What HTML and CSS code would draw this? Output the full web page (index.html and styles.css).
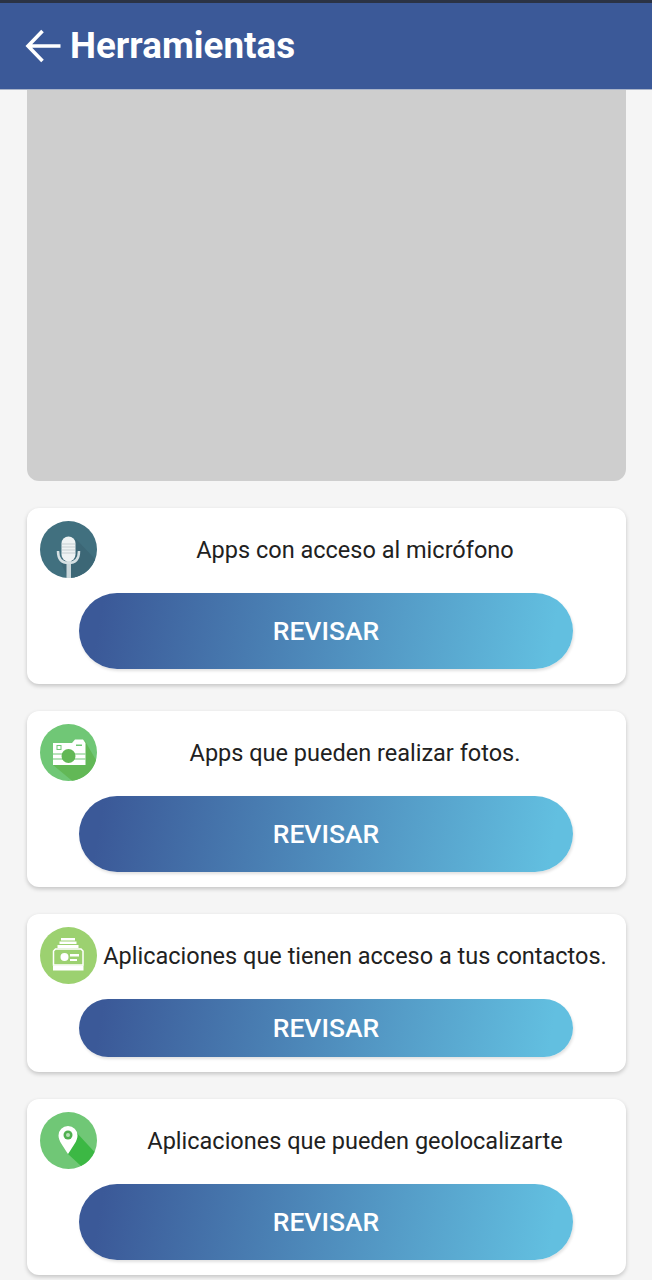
FILE: index.html
```html
<!DOCTYPE html>
<html lang="es">
<head>
    <meta charset="UTF-8">
    <meta name="viewport" content="width=device-width, initial-scale=1.0">
    <title>Herramientas</title>
    <link rel="stylesheet" href="styles.css">
</head>
<body>
    <div class="statusbar"></div>
    <header class="appbar">
        <svg class="back" viewBox="0 0 36 36" width="36" height="36">
            <path d="M35.500 18H3M17.500 3L3 18L17.500 33" fill="none" stroke="#fff" stroke-width="3.600"/>
        </svg>
        <h1>Herramientas</h1>
    </header>
    <main class="content">
        <div class="placeholder"></div>

        <section class="card">
            <div class="row">
                <svg class="icon" viewBox="0 0 57 57">
                    <circle cx="28.500" cy="28.500" r="28.500" fill="#41707f"/>
                    <path d="M36 18L55 38A28.500 28.500 0 0 1 34 56.500L28 57L20 40Z" fill="#3c6776"/>
                    <rect x="26.500" y="40" width="4.500" height="17" fill="#c9d6da"/>
                    <path d="M18 30C18 38 22 42 28.500 42S39 38 39 30" fill="none" stroke="#d5e0e3" stroke-width="2.500"/>
                    <rect x="21.500" y="15.500" width="14" height="25" rx="7" fill="#eef2f3"/>
                    <path d="M22 23H35M22 26H35M22 29H35M22 32H35" stroke="#c5ced1" stroke-width="1"/>
                </svg>
                <p>Apps con acceso al micrófono</p>
            </div>
            <button class="revisar">REVISAR</button>
        </section>

        <section class="card">
            <div class="row">
                <svg class="icon" viewBox="0 0 57 57">
                    <circle cx="28.500" cy="28.500" r="28.500" fill="#70c776"/>
                    <path d="M13 41L45 17L56 36A28.500 28.500 0 0 1 32 56.800Z" fill="#62b856"/>
                    <path d="M13 19H32L35 15.500H43L45.500 19V41H13Z" fill="#fff"/>
                    <path d="M13 30H45.500M13 35H45.500" stroke="#70c776" stroke-width="1.200"/>
                    <circle cx="28.500" cy="32" r="7" fill="#62b856"/>
                    <rect x="17" y="21.500" width="4" height="4" fill="none" stroke="#70c776" stroke-width="1"/>
                    <rect x="36" y="20.500" width="6" height="1.500" fill="#70c776"/>
                </svg>
                <p>Apps que pueden realizar fotos.</p>
            </div>
            <button class="revisar">REVISAR</button>
        </section>

        <section class="card">
            <div class="row">
                <svg class="icon" viewBox="0 0 57 57">
                    <circle cx="28.500" cy="28.500" r="28.500" fill="#9cd170"/>
                    <path d="M21 11H35V13.500H21ZM19.500 14.500H36.500V17H19.500ZM17.500 18H38.500V21H17.500Z" fill="#fff"/>
                    <path d="M15.500 22H41L43 24V38H13.500V24Z" fill="none" stroke="#fff" stroke-width="1.500"/>
                    <circle cx="24.500" cy="30" r="4" fill="#fff"/>
                    <path d="M30 27H39V29.500H30ZM30 32H37V34H30Z" fill="#fff"/>
                    <rect x="13" y="38.500" width="30.500" height="5" fill="#fff"/>
                </svg>
                <p>Aplicaciones que tienen acceso a tus contactos.</p>
            </div>
            <button class="revisar">REVISAR</button>
        </section>

        <section class="card">
            <div class="row">
                <svg class="icon" viewBox="0 0 57 57">
                    <circle cx="28.500" cy="28.500" r="28.500" fill="#70c776"/>
                    <path d="M36 20L54.500 40A28.500 28.500 0 0 1 41 54L28 42Z" fill="#3cb844"/>
                    <path d="M28 42C23 34 18.500 29 18.500 23.500A9.500 9.500 0 0 1 37.500 23.500C37.500 29 33 34 28 42Z" fill="#fff"/>
                    <circle cx="28" cy="23" r="4.500" fill="#4fb04f"/>
                    <circle cx="28" cy="23" r="2" fill="#b8e0b8"/>
                </svg>
                <p>Aplicaciones que pueden geolocalizarte</p>
            </div>
            <button class="revisar">REVISAR</button>
        </section>
    </main>
</body>
</html>
```

FILE: styles.css
```css
body {
    font-family: Roboto, Arial, sans-serif;
    background-color: #f5f5f5;
    margin: 0;
    padding: 0;
    height: 1280px;
    overflow: hidden;
}
.statusbar {
    height: 3px;
    background: #2b3344;
}
.appbar {
    height: 87px;
    background: #3b5998;
    border-bottom: 1px solid #a9b4c9;
    box-sizing: border-box;
    display: flex;
    align-items: center;
    padding-left: 25px;
    color: white;
}
.back {
    flex: none;
    margin-right: 9px;
}
h1 {
    font-size: 36.800px;
    font-weight: 700;
    margin: 0 0 2px;
}
.content {
    padding: 0 26px 0 27px;
}
.placeholder {
    height: 391px;
    background: #cecece;
    border-radius: 0 0 12px 12px;
    margin-bottom: 27px;
}
.card {
    background: white;
    border-radius: 12px;
    box-shadow: 0 2px 4px rgba(0, 0, 0, 0.2);
    padding: 13px 13px 15px;
    margin-bottom: 27px;
}
.row {
    display: flex;
    align-items: center;
    margin-bottom: 15px;
}
.icon {
    width: 57px;
    height: 57px;
    flex: none;
}
.row p {
    flex: 1;
    margin: 0 6px 0 6px;
    text-align: center;
    font-size: 23.500px;
    color: #212121;
    white-space: nowrap;
}
.revisar {
    display: block;
    width: 494px;
    height: 76px;
    margin-left: 39px;
    padding: 0 0 2px;
    border: none;
    border-radius: 38px;
    background: linear-gradient(100deg, #3b5998 5%, #62bfe0 95%);
    box-shadow: 1px 2px 3px rgba(0, 0, 0, 0.12);
    color: white;
    font-family: Roboto, Arial, sans-serif;
    font-size: 26.500px;
    font-weight: 500;
}
.card:nth-of-type(3) .revisar {
    height: 58px;
}
```
